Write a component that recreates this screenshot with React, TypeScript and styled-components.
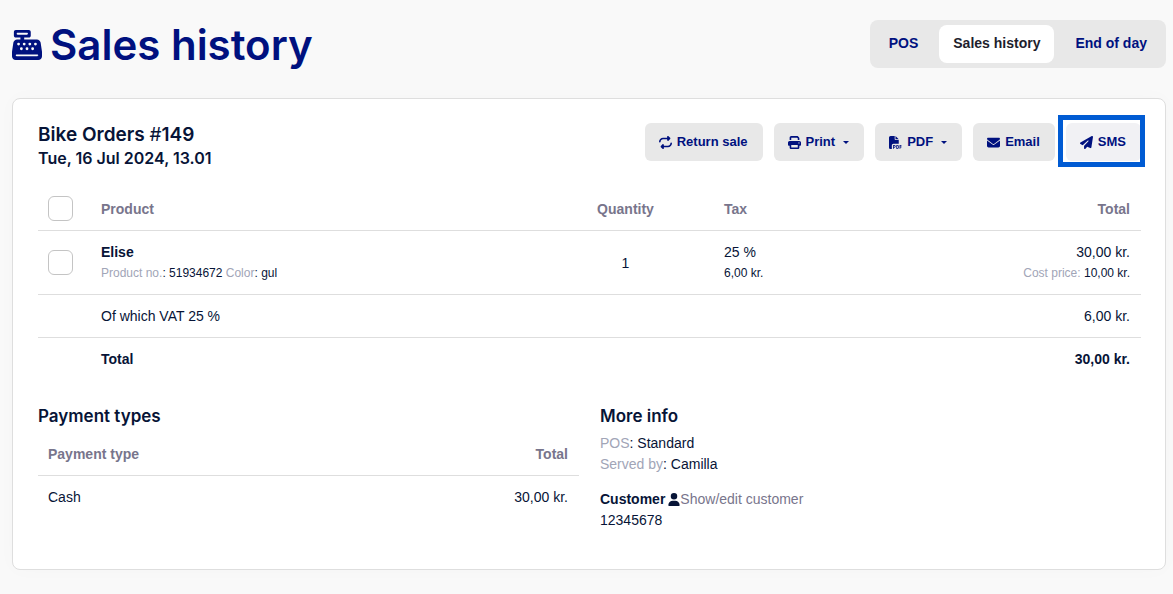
import React from "react";
import styled, { createGlobalStyle, css } from "styled-components";
import {
  FaCashRegister,
  FaEnvelope,
  FaFilePdf,
  FaPaperPlane,
  FaPrint,
  FaRepeat,
  FaUser,
} from "react-icons/fa6";

const color = {
  navy: "#00117f",
  ink: "#071437",
  muted: "#78758c",
  faint: "#a1a5b7",
  line: "#dedede",
  button: "#e8e8e8",
  focus: "#005bd3",
};

const GlobalStyle = createGlobalStyle`
  * { box-sizing: border-box; }
  body {
    margin: 0;
    background: #f9f9f9;
    color: ${color.ink};
    font: 14px/21px "Liberation Sans", Arial, sans-serif;
  }
  h1, h2, h3, p { margin: 0; }
`;

const Page = styled.div`
  padding: 20px 7px 24px 12px;
`;

const Header = styled.header`
  display: flex;
  justify-content: space-between;
  align-items: flex-start;
  margin-bottom: 28px;
`;

const PageTitle = styled.h1`
  display: flex;
  align-items: center;
  gap: 8px;
  color: ${color.navy};
  font: 600 42px/50px Inter, sans-serif;

  svg {
    width: 30px;
    height: 30px;
  }
`;

const Nav = styled.nav`
  display: flex;
  gap: 7px;
  padding: 5px;
  border-radius: 8px;
  background: ${color.button};
`;

const NavLink = styled.a<{ $active?: boolean }>`
  padding: 0 14px 2px;
  border-radius: 8px;
  color: ${(p) => (p.$active ? "#1e1e2d" : color.navy)};
  background: ${(p) => (p.$active ? "#fff" : "transparent")};
  font-weight: 700;
  line-height: 36px;
  text-decoration: none;
`;

const Card = styled.main`
  padding: 24px 24px 38px 25px;
  border: 1px solid ${color.line};
  border-radius: 8px;
  background: #fff;
  box-shadow: 0 0 20px rgba(0, 0, 0, 0.02);
`;

const CardHeader = styled.div`
  display: flex;
  justify-content: space-between;
  align-items: flex-start;
  margin-bottom: 18px;
`;

const OrderTitle = styled.h2`
  font: 600 19px/24px Inter, sans-serif;

  span {
    font-weight: 400;
  }
`;

const OrderDate = styled.p`
  font: 600 16px/23px Inter, sans-serif;
`;

const Actions = styled.div`
  display: flex;
  gap: 11px;
`;

const ActionButton = styled.button<{ $highlighted?: boolean }>`
  display: flex;
  align-items: center;
  gap: 5px;
  height: 38px;
  padding: 0 15px 0 14px;
  border: 0;
  border-radius: 6px;
  background: ${color.button};
  color: ${color.navy};
  font: 700 13px/20px "Liberation Sans", Arial, sans-serif;

  svg {
    width: 13px;
    height: 13px;
  }

  ${(p) =>
    p.$highlighted &&
    css`
      position: relative;
      background: #f1f1f4;

      &::after {
        content: "";
        position: absolute;
        inset: -8px -4px -6px -8px;
        border: 5px solid ${color.focus};
      }
    `}
`;

const Caret = styled.span`
  margin-left: 3px;
  border: 3px solid transparent;
  border-top-color: currentColor;
  border-bottom: 0;
`;

const Table = styled.table`
  width: 100%;
  border-collapse: collapse;
  table-layout: fixed;
`;

const Row = styled.tr`
  & + &,
  tbody > &:first-child {
    border-top: 1px solid ${color.line};
  }
`;

type CellProps = { $align?: "left" | "center" | "right"; $strong?: boolean };

const HeadCell = styled.th<CellProps>`
  padding: 11px 11px 10px 10px;
  color: ${color.muted};
  font-weight: 700;
  text-align: ${(p) => p.$align ?? "left"};
`;

const Cell = styled.td<CellProps>`
  padding: 11px 11px 10px 10px;
  font-weight: ${(p) => (p.$strong ? 700 : 400)};
  text-align: ${(p) => p.$align ?? "left"};
`;

const ProductTable = styled(Table)`
  margin-bottom: 25px;
`;

const Column = styled.col<{ $width?: number }>`
  width: ${(p) => (p.$width ? `${p.$width}px` : "auto")};
`;

const Checkbox = styled.input`
  display: block;
  appearance: none;
  width: 25px;
  height: 25px;
  margin: -3px 0 -1px;
  border: 1px solid #c4c4c4;
  border-radius: 6px;
  background: #fff;
`;

const Small = styled.div`
  font-size: 12px;
`;

const Label = styled.span`
  color: ${color.faint};
`;

const Columns = styled.div`
  display: grid;
  grid-template-columns: 1fr 1fr;
  gap: 21px;
`;

const SectionTitle = styled.h3`
  font: 600 17px/22px Inter, sans-serif;
  margin-bottom: 6px;
`;

const Customer = styled.div`
  margin-top: 14px;
`;

const CustomerLine = styled.p`
  display: flex;
  align-items: center;

  svg {
    width: 12px;
    height: 13px;
    margin-left: 3px;
  }
`;

const CustomerLink = styled.a`
  color: ${color.muted};
  text-decoration: none;
`;

export default function App() {
  return (
    <>
      <GlobalStyle />
      <Page>
        <Header>
          <PageTitle>
            <FaCashRegister />
            Sales history
          </PageTitle>
          <Nav>
            <NavLink href="#pos">POS</NavLink>
            <NavLink href="#sales" $active>
              Sales history
            </NavLink>
            <NavLink href="#end">End of day</NavLink>
          </Nav>
        </Header>
        <Card>
          <CardHeader>
            <div>
              <OrderTitle>
                Bike Orders <span>#</span>149
              </OrderTitle>
              <OrderDate>Tue, 16 Jul 2024, 13.01</OrderDate>
            </div>
            <Actions>
              <ActionButton type="button">
                <FaRepeat />
                Return sale
              </ActionButton>
              <ActionButton type="button">
                <FaPrint />
                Print
                <Caret />
              </ActionButton>
              <ActionButton type="button">
                <FaFilePdf />
                PDF
                <Caret />
              </ActionButton>
              <ActionButton type="button">
                <FaEnvelope />
                Email
              </ActionButton>
              <ActionButton type="button" $highlighted>
                <FaPaperPlane />
                SMS
              </ActionButton>
            </Actions>
          </CardHeader>

          <ProductTable>
            <colgroup>
              <Column $width={53} />
              <Column />
              <Column $width={176} />
              <Column $width={180} />
              <Column $width={247} />
            </colgroup>
            <thead>
              <Row>
                <HeadCell>
                  <Checkbox type="checkbox" aria-label="Select all products" />
                </HeadCell>
                <HeadCell>Product</HeadCell>
                <HeadCell $align="center">Quantity</HeadCell>
                <HeadCell>Tax</HeadCell>
                <HeadCell $align="right">Total</HeadCell>
              </Row>
            </thead>
            <tbody>
              <Row>
                <Cell>
                  <Checkbox type="checkbox" aria-label="Select Elise" />
                </Cell>
                <Cell>
                  <strong>Elise</strong>
                  <Small>
                    <Label>Product no.</Label>: 51934672 <Label>Color</Label>: gul
                  </Small>
                </Cell>
                <Cell $align="center">1</Cell>
                <Cell>
                  25 %<Small>6,00 kr.</Small>
                </Cell>
                <Cell $align="right">
                  30,00 kr.
                  <Small>
                    <Label>Cost price:</Label> 10,00 kr.
                  </Small>
                </Cell>
              </Row>
              <Row>
                <Cell />
                <Cell colSpan={3}>Of which VAT 25 %</Cell>
                <Cell $align="right">6,00 kr.</Cell>
              </Row>
              <Row>
                <Cell />
                <Cell colSpan={3} $strong>
                  Total
                </Cell>
                <Cell $align="right" $strong>
                  30,00 kr.
                </Cell>
              </Row>
            </tbody>
          </ProductTable>

          <Columns>
            <section>
              <SectionTitle>Payment types</SectionTitle>
              <Table>
                <thead>
                  <Row>
                    <HeadCell>Payment type</HeadCell>
                    <HeadCell $align="right">Total</HeadCell>
                  </Row>
                </thead>
                <tbody>
                  <Row>
                    <Cell>Cash</Cell>
                    <Cell $align="right">30,00 kr.</Cell>
                  </Row>
                </tbody>
              </Table>
            </section>
            <section>
              <SectionTitle>More info</SectionTitle>
              <p>
                <Label>POS</Label>: Standard
              </p>
              <p>
                <Label>Served by</Label>: Camilla
              </p>
              <Customer>
                <CustomerLine>
                  <strong>Customer</strong>
                  <FaUser />
                  <CustomerLink href="#customer">Show/edit customer</CustomerLink>
                </CustomerLine>
                <p>12345678</p>
              </Customer>
            </section>
          </Columns>
        </Card>
      </Page>
    </>
  );
}
